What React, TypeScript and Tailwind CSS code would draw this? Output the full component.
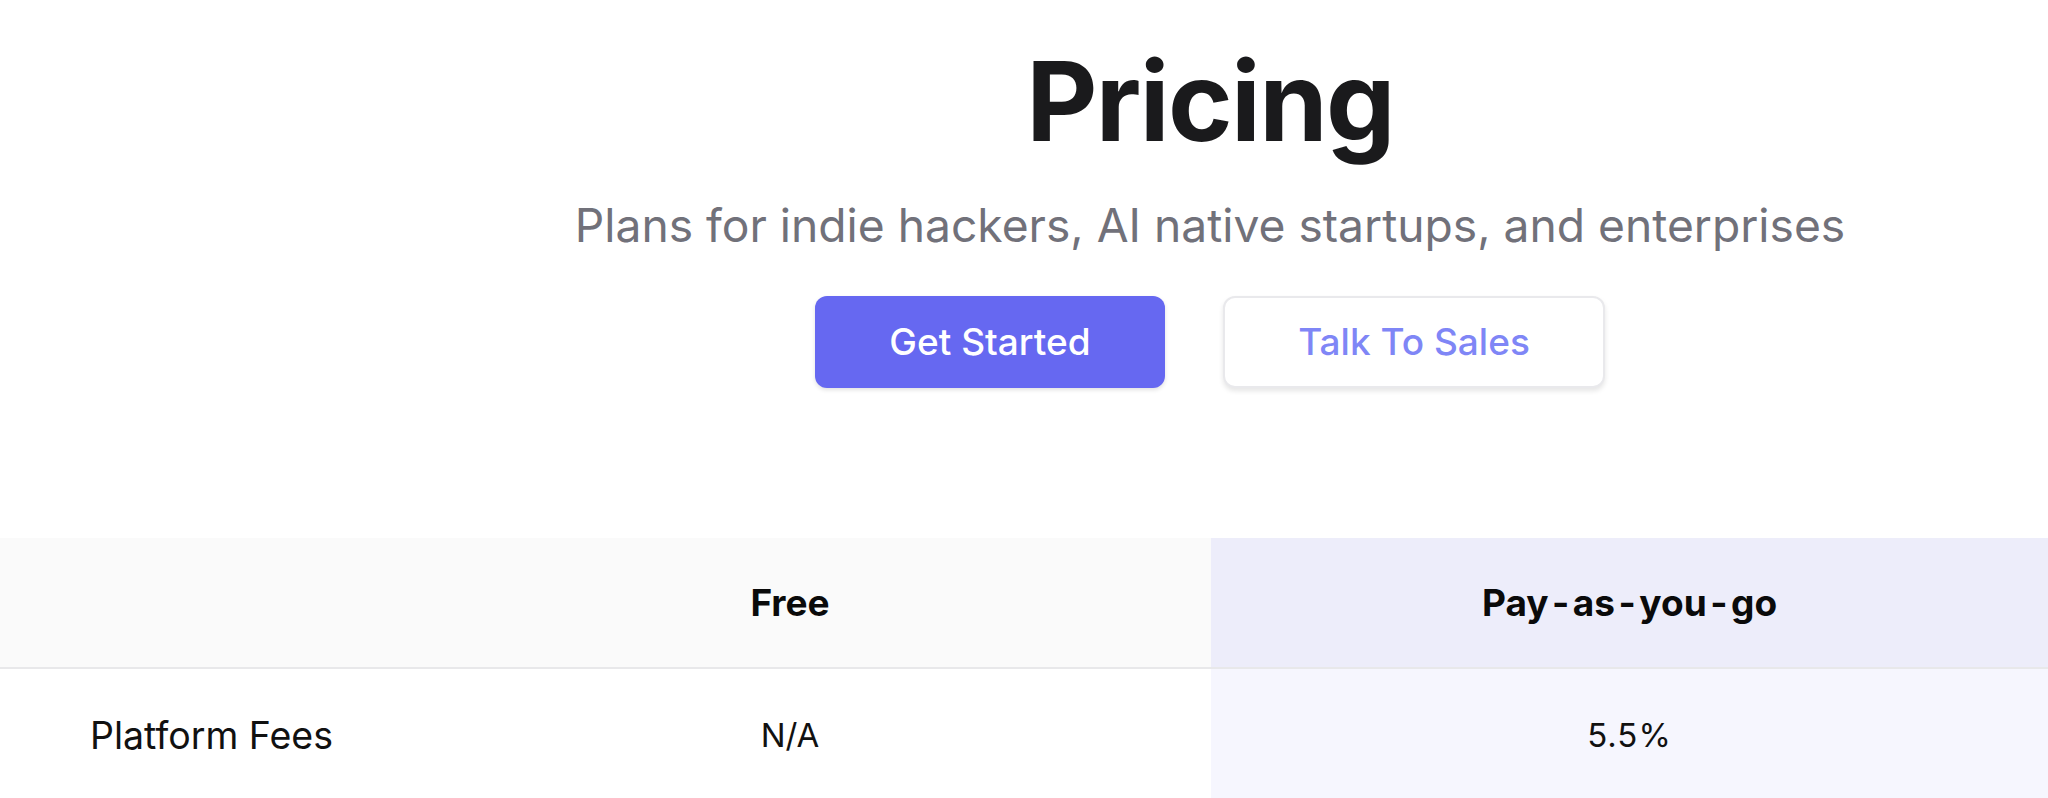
import React from "react";

export default function App() {
  return (
    <div className="w-[2048px] h-[798px] overflow-hidden bg-white font-['Inter',sans-serif]">
      <section className="pl-[372px] flex flex-col items-center text-center">
        <h1 className="pt-[46px] text-[110px] leading-none font-bold tracking-[-0.015em] text-[#1a1a1c]">
          Pricing
        </h1>
        <p className="mt-[42px] text-[46.2px] leading-[55px] text-[#71717a]">
          Plans for indie hackers, AI native startups, and enterprises
        </p>
        <div className="mt-[43px] flex gap-[58px]">
          <button className="w-[350px] h-[92px] rounded-[12px] bg-[#6668f1] text-white text-[37px] font-medium shadow-[0_2px_4px_rgba(0,0,0,0.12)]">
            Get Started
          </button>
          <button className="w-[382px] h-[92px] rounded-[12px] bg-white border-2 border-[#e9e9ec] text-[#7f86f6] text-[37px] font-medium shadow-[0_3px_5px_rgba(0,0,0,0.1)]">
            Talk To Sales
          </button>
        </div>
      </section>

      <div className="mt-[150px] grid grid-cols-[369px_842px_837px]">
        <div className="h-[131px] bg-[#fafafa] border-b-2 border-[#e8e8ea]" />
        <div className="h-[131px] bg-[#fafafa] border-b-2 border-[#e8e8ea] flex items-center justify-center text-[37px] font-bold text-[#0a0a0a]">
          Free
        </div>
        <div className="h-[131px] bg-[#ededfa] border-b-2 border-[#e8e8ea] flex items-center justify-center text-[37px] font-bold text-[#0a0a0a]">
          Pay<span className="mx-[3.5px]">-</span>as<span className="mx-[3.5px]">-</span>you<span className="mx-[3.5px]">-</span>go
        </div>

        <div className="h-[134px] bg-white flex items-center pl-[90px] text-[37.5px] text-[#111111]">
          Platform Fees
        </div>
        <div className="h-[134px] bg-white flex items-center justify-center text-[33px] text-[#111111]">
          N/A
        </div>
        <div className="h-[134px] bg-[#f6f6fe] flex items-center justify-center text-[33px] tracking-[0.03em] text-[#111111]">
          5.5%
        </div>
      </div>
    </div>
  );
}
